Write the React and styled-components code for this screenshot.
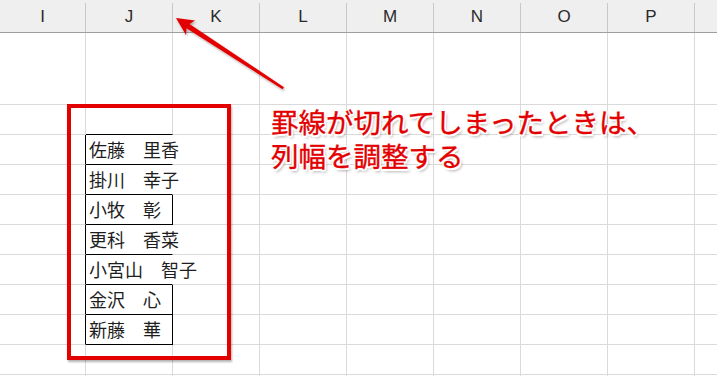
import React from "react";
import styled, { createGlobalStyle } from "styled-components";

const GlobalStyle = createGlobalStyle`
  html, body {
    margin: 0;
    padding: 0;
    background: #ffffff;
  }
`;

const Sheet = styled.div`
  position: relative;
  width: 717px;
  height: 376px;
  overflow: hidden;
  background: #ffffff;
  font-family: "Noto Sans CJK JP", "Noto Sans", sans-serif;
`;

const Grid = styled.div`
  display: grid;
  grid-template-columns: 86px repeat(8, 87px) 1fr;
`;

const HeadCell = styled.div`
  box-sizing: border-box;
  height: 33px;
  padding-top: 3px;
  background: #efefef;
  border-bottom: 1px solid #9f9f9f;
  display: flex;
  align-items: stretch;
`;

const HeadLabel = styled.div`
  flex: 1;
  display: flex;
  align-items: center;
  justify-content: center;
  border-right: 1px solid #c8c8c8;
  font-family: "Liberation Sans", "Noto Sans", sans-serif;
  font-size: 17px;
  color: #2a2a2a;
  padding-bottom: 2px;
`;

const Cell = styled.div`
  box-sizing: border-box;
  height: ${(p) => p.$h}px;
  border-right: 1px solid ${(p) => p.$right || "#dadada"};
  border-bottom: 1px solid ${(p) => p.$bottom || "#dadada"};
  padding: 3px 0 0 3px;
  white-space: nowrap;
  overflow: visible;
  font-size: 18px;
  line-height: 22px;
  color: #1e1e1e;
  position: relative;
  z-index: 1;
`;

const Frame = styled.div`
  position: absolute;
  left: 67px;
  top: 104px;
  width: 164px;
  height: 256px;
  box-sizing: border-box;
  border: 4px solid #e30000;
  box-shadow: 1px 2px 2px rgba(0, 0, 0, 0.3);
  z-index: 3;
`;

const Note = styled.div`
  position: absolute;
  left: 271px;
  top: 104px;
  z-index: 3;
  font-size: 27.5px;
  line-height: 34px;
  color: #e30000;
  white-space: nowrap;
  -webkit-text-stroke: 0.35px #e30000;
  text-shadow: -1.5px 0 0 #fff, 1.5px 0 0 #fff, 0 -1.5px 0 #fff, 0 1.5px 0 #fff,
    -1.5px -1.5px 0 #fff, 1.5px 1.5px 0 #fff, -1.5px 1.5px 0 #fff,
    1.5px -1.5px 0 #fff, 2px 3px 3px rgba(0, 0, 0, 0.35);
`;

const Arrow = styled.svg`
  position: absolute;
  left: 0;
  top: 0;
  z-index: 4;
  pointer-events: none;
`;

const columns = ["I", "J", "K", "L", "M", "N", "O", "P", ""];

// rows below the tall first row; name lives in column J
const rows = [
  { name: null, topOfBox: true },
  { name: "佐藤　里香" },
  { name: "掛川　幸子" },
  { name: "小牧　彰", boxed: true },
  { name: "更科　香菜" },
  { name: "小宮山　智子" },
  { name: "金沢　心", boxed: true },
  { name: "新藤　華", boxed: true },
  { name: null },
  { name: null },
];

const renderRow = (row, i) => {
  const cells = [];
  for (let c = 0; c < 10; c++) {
    let right;
    let bottom;
    let text = null;
    if (row.name && c === 0) right = "#000";
    if (c === 1) {
      if (row.topOfBox) bottom = "#000";
      if (row.name) {
        bottom = "#000";
        text = row.name;
        right = row.boxed ? "#000" : "transparent";
      }
    }
    cells.push(
      <Cell key={`${i}-${c}`} $h={30} $right={right} $bottom={bottom}>
        {text}
      </Cell>
    );
  }
  return cells;
};

export default function App() {
  return (
    <Sheet>
      <GlobalStyle />
      <Grid>
        {columns.map((l, i) => (
          <HeadCell key={"h" + i}>
            <HeadLabel>{l}</HeadLabel>
          </HeadCell>
        ))}
        <HeadCell>
          <HeadLabel />
        </HeadCell>
        {Array.from({ length: 10 }).map((_, c) => (
          <Cell key={"a" + c} $h={72} />
        ))}
        {rows.map(renderRow)}
      </Grid>
      <Frame />
      <Note>
        罫線が切れてしまったときは、
        <br />
        列幅を調整する
      </Note>
      <Arrow width="717" height="376" viewBox="0 0 717 376">
        <defs>
          <filter id="arrowShadow" x="-10%" y="-10%" width="130%" height="130%">
            <feDropShadow dx="1" dy="1.5" stdDeviation="1" floodColor="#000" floodOpacity="0.35" />
          </filter>
        </defs>
        <polygon
          points="176,18 195,20.5 189.5,24 284,87.2 282.5,89.2 186.5,28.2 186,35"
          fill="#e30000"
          filter="url(#arrowShadow)"
        />
      </Arrow>
    </Sheet>
  );
}
